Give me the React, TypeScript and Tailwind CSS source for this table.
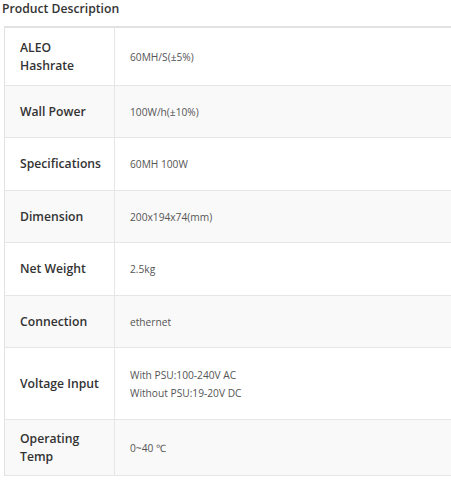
const rows: { label: string; value: string[]; h: string }[] = [
  { label: "ALEO Hashrate", value: ["60MH/S(±5%)"], h: "h-[58px]" },
  { label: "Wall Power", value: ["100W/h(±10%)"], h: "h-[52px]" },
  { label: "Specifications", value: ["60MH 100W"], h: "h-[53px]" },
  { label: "Dimension", value: ["200x194x74(mm)"], h: "h-[52px]" },
  { label: "Net Weight", value: ["2.5kg"], h: "h-[53px]" },
  { label: "Connection", value: ["ethernet"], h: "h-[52px]" },
  { label: "Voltage Input", value: ["With PSU:100-240V AC", "Without PSU:19-20V DC"], h: "h-[72px]" },
  { label: "Operating Temp", value: ["0~40 ℃"], h: "h-[56px]" },
]

export default function App() {
  return (
    <div className="w-[451px] h-[488px] overflow-hidden bg-white font-['Open_Sans',sans-serif]">
      <h2 className="pl-[2px] h-[26px] text-[12.2px] font-semibold leading-[17px] text-[#333]">
        Product Description
      </h2>
      <div className="ml-[4px] w-[470px] border-t-2 border-l border-[#e2e2e2]">
        {rows.map((r, i) => (
          <div
            key={r.label}
            className={`flex border-b border-[#e6e6e6] ${r.h} ${i % 2 === 1 ? "bg-[#f9f9f9]" : "bg-white"}`}
          >
            <div className="w-[110px] shrink-0 flex items-center pl-[15px] pr-2 border-r border-[#e6e6e6] text-[12.2px] font-semibold leading-[18px] text-[#333]">
              {r.label}
            </div>
            <div className="flex-1 flex flex-col justify-center pl-[15px] text-[10.2px] leading-[18px] text-[#555]">
              {r.value.map((v) => (
                <p key={v}>{v}</p>
              ))}
            </div>
          </div>
        ))}
      </div>
    </div>
  )
}
